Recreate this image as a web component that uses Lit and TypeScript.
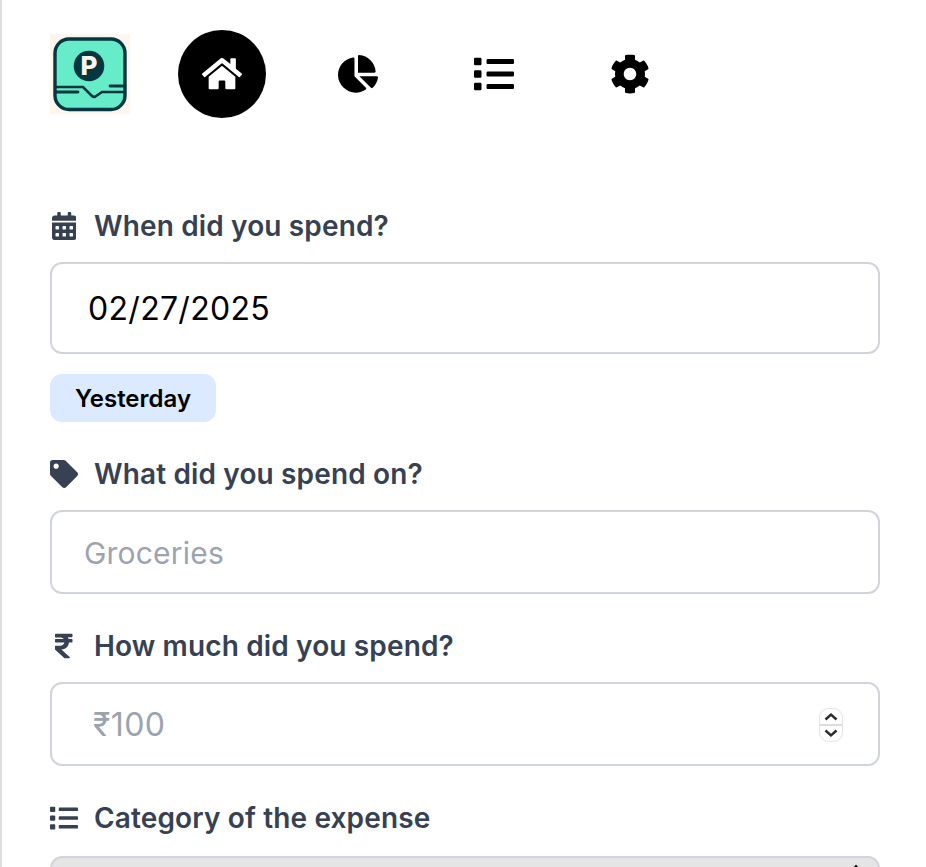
import { LitElement, html, css, svg } from "lit";
import { customElement } from "lit/decorators.js";

const ICONS: Record<string, [number, string]> = {
  home: [576, "M280.37 148.26L96 300.11V464a16 16 0 0 0 16 16l112.06-.29a16 16 0 0 0 15.92-16V368a16 16 0 0 1 16-16h64a16 16 0 0 1 16 16v95.64a16 16 0 0 0 16 16.05L464 480a16 16 0 0 0 16-16V300L295.67 148.26a12.19 12.19 0 0 0-15.3 0zM571.6 251.47L488 182.56V44.05a12 12 0 0 0-12-12h-56a12 12 0 0 0-12 12v72.61L318.47 43a48 48 0 0 0-61 0L4.34 251.47a12 12 0 0 0-1.6 16.9l25.5 31A12 12 0 0 0 45.15 301l235.22-193.74a12.19 12.19 0 0 1 15.3 0L530.9 301a12 12 0 0 0 16.9-1.6l25.5-31a12 12 0 0 0-1.7-16.93z"],
  pie: [544, "M527.79 288H290.5l158.03 158.03c6.04 6.04 15.98 6.53 22.19.68 38.7-36.46 65.32-85.61 73.13-140.86 1.34-9.46-6.51-17.85-16.06-17.85zm-15.83-64.8C503.72 103.74 408.26 8.28 288.8.04 279.68-.59 272 7.1 272 16.24V240h223.77c9.14 0 16.82-7.68 16.19-16.8zM224 288V50.71c0-9.55-8.39-17.4-17.84-16.06C86.99 51.49-4.1 155.6.14 280.37 4.5 408.51 114.83 513.59 243.03 511.98c50.4-.63 96.97-16.87 135.26-44.03 7.9-5.6 8.42-17.23 1.57-24.08L224 288z"],
  list: [512, "M80 368H16a16 16 0 0 0-16 16v64a16 16 0 0 0 16 16h64a16 16 0 0 0 16-16v-64a16 16 0 0 0-16-16zm0-320H16A16 16 0 0 0 0 64v64a16 16 0 0 0 16 16h64a16 16 0 0 0 16-16V64a16 16 0 0 0-16-16zm0 160H16a16 16 0 0 0-16 16v64a16 16 0 0 0 16 16h64a16 16 0 0 0 16-16v-64a16 16 0 0 0-16-16zm416 176H176a16 16 0 0 0-16 16v32a16 16 0 0 0 16 16h320a16 16 0 0 0 16-16v-32a16 16 0 0 0-16-16zm0-320H176a16 16 0 0 0-16 16v32a16 16 0 0 0 16 16h320a16 16 0 0 0 16-16V80a16 16 0 0 0-16-16zm0 160H176a16 16 0 0 0-16 16v32a16 16 0 0 0 16 16h320a16 16 0 0 0 16-16v-32a16 16 0 0 0-16-16z"],
  cog: [512, "M487.4 315.7l-42.6-24.6c4.3-23.2 4.3-47 0-70.2l42.6-24.6c4.9-2.8 7.1-8.6 5.5-14-11.1-35.6-30-67.8-54.7-94.6-3.8-4.1-10-5.1-14.8-2.3L380.8 110c-17.9-15.4-38.5-27.3-60.8-35.1V25.8c0-5.6-3.9-10.5-9.4-11.7-36.7-8.2-74.3-7.8-109.2 0-5.5 1.2-9.4 6.1-9.4 11.7V75c-22.2 7.9-42.8 19.8-60.8 35.1L88.7 85.5c-4.9-2.8-11-1.9-14.8 2.3-24.7 26.7-43.6 58.9-54.7 94.6-1.7 5.4.6 11.2 5.5 14L67.3 221c-4.3 23.2-4.3 47 0 70.2l-42.6 24.6c-4.9 2.8-7.1 8.6-5.5 14 11.1 35.6 30 67.8 54.7 94.6 3.8 4.1 10 5.1 14.8 2.3l42.6-24.6c17.9 15.4 38.5 27.3 60.8 35.1v49.2c0 5.6 3.9 10.5 9.4 11.7 36.7 8.2 74.3 7.8 109.2 0 5.5-1.2 9.4-6.1 9.4-11.7v-49.2c22.2-7.9 42.8-19.8 60.8-35.1l42.6 24.6c4.9 2.8 11 1.9 14.8-2.3 24.7-26.7 43.6-58.9 54.7-94.6 1.5-5.5-.7-11.3-5.6-14.1zM256 336c-44.1 0-80-35.9-80-80s35.9-80 80-80 80 35.9 80 80-35.9 80-80 80z"],
  calendar: [448, "M0 464c0 26.5 21.5 48 48 48h352c26.5 0 48-21.5 48-48V192H0v272zm320-196c0-6.6 5.4-12 12-12h40c6.6 0 12 5.4 12 12v40c0 6.6-5.4 12-12 12h-40c-6.6 0-12-5.4-12-12v-40zm0 128c0-6.6 5.4-12 12-12h40c6.6 0 12 5.4 12 12v40c0 6.6-5.4 12-12 12h-40c-6.6 0-12-5.4-12-12v-40zM192 268c0-6.6 5.4-12 12-12h40c6.6 0 12 5.4 12 12v40c0 6.6-5.4 12-12 12h-40c-6.6 0-12-5.4-12-12v-40zm0 128c0-6.6 5.4-12 12-12h40c6.6 0 12 5.4 12 12v40c0 6.6-5.4 12-12 12h-40c-6.6 0-12-5.4-12-12v-40zM64 268c0-6.6 5.4-12 12-12h40c6.6 0 12 5.4 12 12v40c0 6.6-5.4 12-12 12H76c-6.6 0-12-5.4-12-12v-40zm0 128c0-6.6 5.4-12 12-12h40c6.6 0 12 5.4 12 12v40c0 6.6-5.4 12-12 12H76c-6.6 0-12-5.4-12-12v-40zM400 64h-48V16c0-8.8-7.2-16-16-16h-32c-8.8 0-16 7.2-16 16v48H160V16c0-8.8-7.2-16-16-16h-32c-8.8 0-16 7.2-16 16v48H48C21.5 64 0 85.5 0 112v48h448v-48c0-26.5-21.5-48-48-48z"],
  tag: [512, "M0 252.118V48C0 21.49 21.49 0 48 0h204.118a48 48 0 0 1 33.941 14.059l211.882 211.882c18.745 18.745 18.745 49.137 0 67.882L293.823 497.941c-18.745 18.745-49.137 18.745-67.882 0L14.059 286.059A48 48 0 0 1 0 252.118zM112 64c-26.51 0-48 21.49-48 48s21.49 48 48 48 48-21.49 48-48-21.49-48-48-48z"],
  rupee: [320, "M308 96c6.627 0 12-5.373 12-12V44c0-6.627-5.373-12-12-12H12C5.373 32 0 37.373 0 44v44.748c0 6.627 5.373 12 12 12h85.28c27.308 0 48.261 9.958 60.97 27.252H12c-6.627 0-12 5.373-12 12v40c0 6.627 5.373 12 12 12h158.757c-6.217 36.086-32.961 58.632-74.757 58.632H12c-6.627 0-12 5.373-12 12v53.012c0 3.349 1.4 6.546 3.861 8.818l165.052 152.356a12.001 12.001 0 0 0 8.139 3.182h82.562c10.924 0 16.166-13.408 8.139-20.818L116.871 319.906c76.499-2.34 131.144-53.395 138.318-127.906H308c6.627 0 12-5.373 12-12v-40c0-6.627-5.373-12-12-12h-58.69c-3.486-11.541-8.28-22.246-14.252-32H308z"],
};

function icon(name: string, size: number) {
  const [w, d] = ICONS[name];
  return html`<svg width=${size * w / 512} height=${size} viewBox="0 0 ${w} 512" fill="currentColor">${svg`<path d=${d}></path>`}</svg>`;
}

function navIcon(name: string) {
  const [w, d] = ICONS[name];
  return html`<svg width="40" height=${40 * 512 / w} viewBox="0 0 ${w} 512" fill="currentColor">${svg`<path d=${d}></path>`}</svg>`;
}

@customElement("app-root")
export class AppRoot extends LitElement {
  static styles = css`
    :host {
      display: block;
      height: 867px;
      overflow: hidden;
      box-sizing: border-box;
      border-left: 2px solid #dedede;
      background: #fff;
      font-family: Inter, "Liberation Sans", sans-serif;
    }
    .page { padding: 30px 46px 0 48px; display: flex; flex-direction: column; }
    nav { display: flex; gap: 48px; align-items: center; margin-bottom: 88px; }
    .logo { width: 80px; height: 80px; display: block; }
    .nav-item { width: 88px; height: 88px; border-radius: 50%; display: flex; align-items: center; justify-content: center; color: #000; }
    .nav-item.active { background: #000; color: #fff; }
    label { display: flex; align-items: center; height: 40px; gap: 16px; color: #374151; font-size: 28px; font-weight: 600; letter-spacing: 0.14px; }
    .ico { width: 28px; height: 28px; display: flex; align-items: center; justify-content: center; flex: none; }
    .field { display: flex; align-items: center; box-sizing: border-box; margin-top: 16px; height: 84px; border: 2px solid #d1d5db; border-radius: 12px; padding: 0 35px 0 32px; background: #fff; }
    .field.date { height: 92px; padding-left: 36px; }
    .field + label, .chip + label { margin-top: 32px; }
    input { flex: 1; min-width: 0; border: 0; outline: 0; padding: 1px 0 0; background: transparent; font-family: inherit; font-size: 30px; letter-spacing: 0.2px; color: #000; }
    input::placeholder { color: #9ca3af; opacity: 1; }
    .date input { font-size: 32px; letter-spacing: 0.3px; }
    .amount { padding-left: 41px; }
    .amount input { font-size: 32px; letter-spacing: 0.4px; }
    .chip { align-self: flex-start; margin-top: 20px; height: 48px; box-sizing: border-box; padding: 0 25px; border-radius: 12px; background: #dbeafe; color: #000; font-size: 24px; font-weight: 600; display: flex; align-items: center; }
    .spin { width: 24px; height: 34px; flex: none; display: block; margin-top: 1px; }
    .select { margin-top: 18px; height: 60px; box-sizing: border-box; border: 2px solid #d1d5db; border-radius: 12px; background: #e5e5e5; display: flex; justify-content: flex-end; padding-right: 16px; flex: none; }
    .select svg { display: block; margin-top: 5px; }
  `;

  render() {
    return html`<div class="page">
      <nav>
        <svg class="logo" viewBox="0 0 80 80">
          <rect width="80" height="80" fill="#fdf5ee"></rect>
          <rect x="5" y="5" width="70" height="70.5" rx="14" fill="#66ecc8" stroke="#06363f" stroke-width="3.4"></rect>
          <circle cx="39" cy="32" r="15.3" fill="#06363f"></circle>
          <text x="39" y="41" text-anchor="middle" font-family="Inter, sans-serif" font-size="26" font-weight="800" fill="#fdf5ee">P</text>
          <path d="M5 53H33L42 62Q43.5 63.5 45.5 62.5L52 58H75" fill="none" stroke="#06363f" stroke-width="2.6"></path>
          <path d="M6 58H28M60 52H75" fill="none" stroke="#06363f" stroke-width="2.8" stroke-linecap="round"></path>
        </svg>
        <div class="nav-item active">${navIcon("home")}</div>
        <div class="nav-item">${navIcon("pie")}</div>
        <div class="nav-item">${navIcon("list")}</div>
        <div class="nav-item">${navIcon("cog")}</div>
      </nav>

      <label><span class="ico">${icon("calendar", 28)}</span>When did you spend?</label>
      <div class="field date"><input type="text" value="02/27/2025" /></div>
      <div class="chip">Yesterday</div>

      <label><span class="ico">${icon("tag", 28)}</span>What did you spend on?</label>
      <div class="field"><input type="text" placeholder="Groceries" /></div>

      <label><span class="ico">${icon("rupee", 28)}</span>How much did you spend?</label>
      <div class="field amount">
        <input type="text" placeholder="₹100" />
        <svg class="spin" viewBox="0 0 24 34">
          <rect x="0.5" y="0.5" width="23" height="33" rx="9" fill="#fff" stroke="#e3e3e3"></rect>
          <rect x="1" y="16" width="22" height="2" fill="#dcdcdc"></rect>
          <path d="M6.5 11.5L12 6.5L17.5 11.5M6.5 22.5L12 27.5L17.5 22.5" fill="none" stroke="#2b2b2b" stroke-width="2.4"></path>
        </svg>
      </div>

      <label><span class="ico">${icon("list", 28)}</span>Category of the expense</label>
      <div class="select">
        <svg width="12" height="10" viewBox="0 0 12 10"><path d="M3 6L6 3L9 6" fill="none" stroke="#222" stroke-width="2"></path></svg>
      </div>
    </div>`;
  }
}
